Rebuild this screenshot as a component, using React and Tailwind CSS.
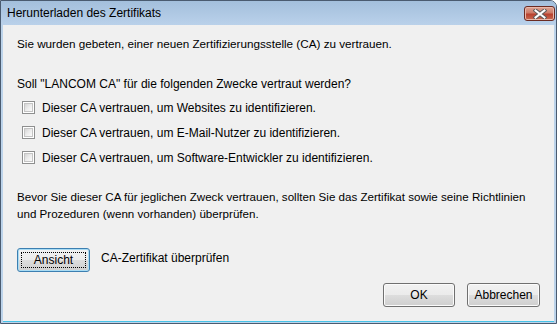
import React from 'react';

const CheckRow = ({ label }) => (
  <div className="flex items-center h-[25px]">
    <span className="ml-[5px] w-[13px] h-[13px] border border-[#8e8f8f] bg-white p-[1px] box-border">
      <span className="block w-full h-full border border-[#c4c4c4] bg-gradient-to-br from-[#d5d5d5] via-[#ececec] to-[#fbfbfb]" />
    </span>
    <span className="ml-[7px] text-[12px] leading-[16px]">{label}</span>
  </div>
);

const WinButton = ({ children, className = '', focused = false }) => (
  <button
    className={
      'h-[24px] rounded-[3px] border text-[12px] text-black relative ' +
      (focused
        ? 'border-[#3c7fb1] shadow-[inset_0_0_0_1px_#a9dcf4] '
        : 'border-[#707070] shadow-[inset_0_0_0_1px_#fbfbfb] ') +
      'bg-[linear-gradient(#f2f2f2_0%,#ebebeb_50%,#dddddd_51%,#cfcfcf_100%)] ' +
      className
    }
  >
    {focused && (
      <span className="absolute inset-[3px] border border-dotted border-black" />
    )}
    <span className="relative">{children}</span>
  </button>
);

const CloseButton = () => (
  <div className="w-[31px] h-[15px] mt-[5px] rounded-[3px] border border-[#6b2b22] bg-[linear-gradient(#dca595_0%,#cd7b68_45%,#b8412e_55%,#c86a52_100%)] shadow-[inset_0_0_0_1px_#e9b8aa] flex items-center justify-center">
    <svg width="14" height="10" viewBox="0 0 14 10">
      <path d="M2.5 1.5 L11.5 8.5 M11.5 1.5 L2.5 8.5" stroke="#5a5a5a" strokeWidth="4" strokeLinecap="square" />
      <path d="M2.5 1.5 L11.5 8.5 M11.5 1.5 L2.5 8.5" stroke="#ffffff" strokeWidth="2" strokeLinecap="square" />
    </svg>
  </div>
);

export default function App() {
  return (
    <div
      className="w-[558px] h-[325px] bg-white text-black overflow-hidden"
      style={{ fontFamily: '"Liberation Sans", Arial, sans-serif' }}
    >
      <div className="w-[557px] h-[324px] border border-[#4a5b70] rounded-tr-[7px] bg-[#bcd3ea] flex flex-col">
        <div className="h-[24px] flex items-start justify-between pl-[6px] pr-[1px] bg-[linear-gradient(#a3bfdc,#bad1ea)] rounded-tr-[6px]">
          <span className="text-[12px] leading-[24px]">Herunterladen des Zertifikats</span>
          <CloseButton />
        </div>
        <div className="flex-1 mx-[2px] mb-[1px] bg-[#f0f0f0] border-b border-[#46c3e8] pl-[14px] pr-[14px] pt-[11px]">
          <div className="text-[11.7px] leading-[16px]">
            Sie wurden gebeten, einer neuen Zertifizierungsstelle (CA) zu vertrauen.
          </div>
          <div className="mt-[24px] text-[12px] leading-[16px]">
            Soll "LANCOM CA" für die folgenden Zwecke vertraut werden?
          </div>
          <div className="mt-[3px]">
            <CheckRow label="Dieser CA vertrauen, um Websites zu identifizieren." />
            <CheckRow label="Dieser CA vertrauen, um E-Mail-Nutzer zu identifizieren." />
            <CheckRow label="Dieser CA vertrauen, um Software-Entwickler zu identifizieren." />
          </div>
          <div className="mt-[18px] text-[11.6px] leading-[17px]">
            Bevor Sie dieser CA für jeglichen Zweck vertrauen, sollten Sie das Zertifikat sowie seine Richtlinien
            <br />
            und Prozeduren (wenn vorhanden) überprüfen.
          </div>
          <div className="mt-[26px] flex items-center">
            <WinButton focused className="w-[73px]">Ansicht</WinButton>
            <span className="ml-[11px] text-[12px] leading-[16px] -mt-[4px]">CA-Zertifikat überprüfen</span>
          </div>
          <div className="mt-[11px] flex justify-end gap-[12px]">
            <WinButton className="w-[72px]">OK</WinButton>
            <WinButton className="w-[73px]">Abbrechen</WinButton>
          </div>
        </div>
      </div>
    </div>
  );
}
